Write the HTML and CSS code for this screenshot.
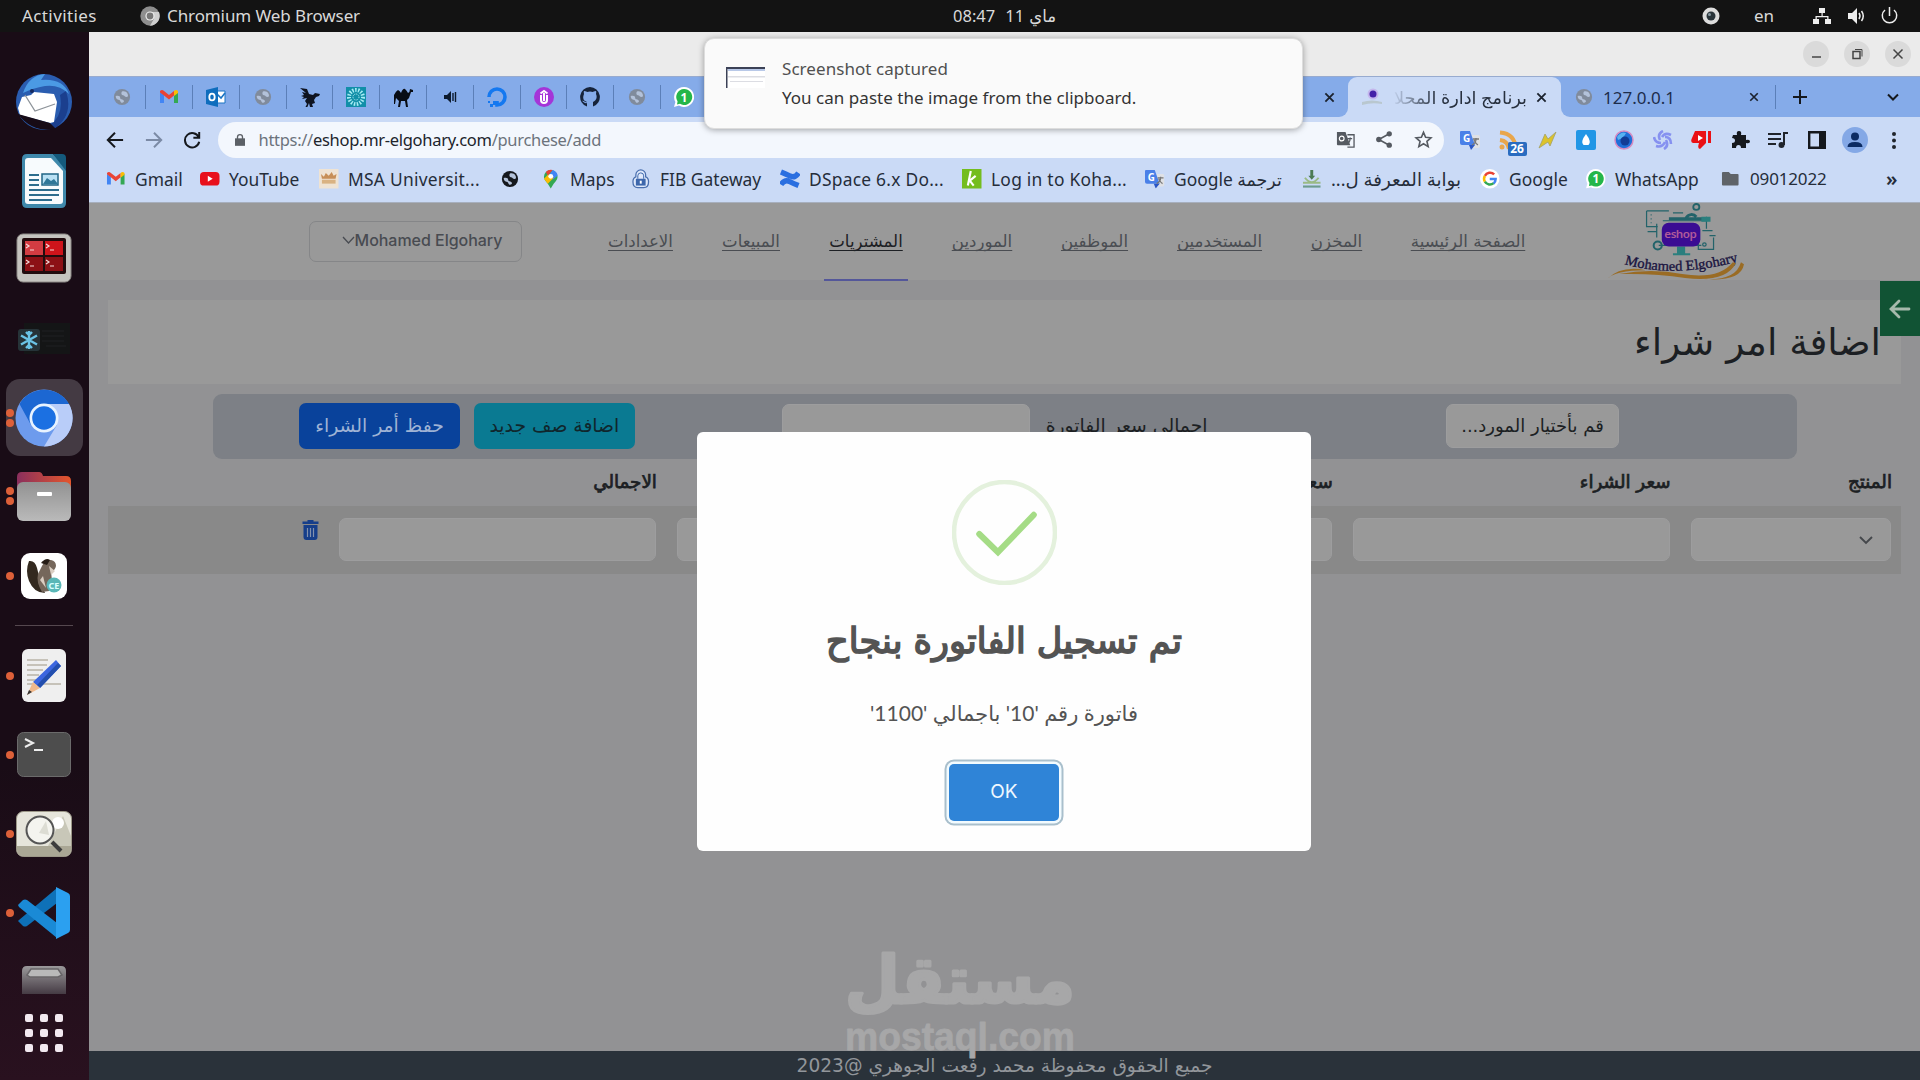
FILE: index.html
```html
<!DOCTYPE html>
<html lang="ar">
<head>
<meta charset="utf-8">
<title>برنامج ادارة المحلات</title>
<link rel="stylesheet" href="styles.css">
</head>
<body>
<svg class="defs" width="0" height="0" aria-hidden="true">
  <symbol id="globe" viewBox="0 0 20 20"><circle cx="10" cy="10" r="9"/><path class="land" d="M3 9c3-1 5 0 5 2s3 1 4 3-2 3-3 2-1-3-3-3-3-2-3-4zM10 4c2-1 5 0 6 2s1 4-1 4-2-2-4-2-2-3-1-4z"/></symbol>
  <symbol id="gmail" viewBox="0 0 20 20"><path fill="#4285f4" d="M1 5v11h4V8z"/><path fill="#34a853" d="M15 8v8h4V5z"/><path fill="#ea4335" d="M1 4q2-2 4 0l5 4 5-4v4.500l-5 4-5-4-4-3z"/><path fill="#fbbc04" d="M15 4q2-2 4 0v2l-4 3z"/></symbol>
  <symbol id="whats" viewBox="0 0 20 20"><path fill="#fff" d="M10 0a10 10 0 1 1-5 18.600L0 20l1.400-5A10 10 0 0 1 10 0z"/><path fill="#25b64a" d="M10 2a8 8 0 1 1-4 14.800L3 17.400l.6-3A8 8 0 0 1 10 2z"/><text x="10" y="14.500" font-size="12" font-weight="700" fill="#fff" text-anchor="middle">1</text></symbol>
  <symbol id="gtrans" viewBox="0 0 20 20"><path fill="#dfe1e5" d="M9 5h9q2 0 2 2v9q0 2-2 2h-7z"/><path fill="#4a80e8" d="M1 1h9l5 14H2q-2 0-2-2V2q0-1 1-1z"/><path fill="#2a56c6" d="M9 15h6l-4 5z"/><path fill="none" stroke="#777" stroke-width="1.300" d="M13 9h6M16 8v1c0 3-2 5-4 6M14 10c1 2 2 4 4 5"/><text x="6.500" y="12" font-size="10" font-weight="700" fill="#fff" text-anchor="middle">G</text></symbol>
  <symbol id="close" viewBox="0 0 12 12"><path fill="none" stroke="currentColor" stroke-width="2" d="M1.500 1.500l9 9M10.500 1.500l-9 9"/></symbol>
</svg>

<div class="desktop">
  <header class="topbar">
    <span class="activities">Activities</span>
    <svg class="app-glyph" viewBox="0 0 20 20"><circle cx="10" cy="10" r="9.700" fill="#8e8e8e"/><path fill="#cfcfcf" d="M10 6h9a10 10 0 0 1-9 13.700l4-7z"/><circle cx="10" cy="10" r="4.600" fill="#eee"/><circle cx="10" cy="10" r="3.400" fill="#777"/></svg>
    <span class="app-name">Chromium Web Browser</span>
    <span class="clock">08:47&nbsp; 11 ماي</span>
    <svg class="rec" viewBox="0 0 18 18"><circle cx="9" cy="9" r="8.500" fill="#ddd"/><circle cx="9" cy="9" r="4.500" fill="#29343a"/><circle cx="7.500" cy="7.500" r="1.500" fill="#8898a0"/></svg>
    <span class="lang">en</span>
    <svg class="sys" viewBox="0 0 88 20"><g fill="#eee"><path d="M7 2h6v5H7zM1 13h6v5H1zM13 13h6v5h-6z"/><path d="M9.500 7h1.200v3h5.800v3h-1.300v-1.800H4.800V13H3.500v-3h6z"/><path d="M36 7h4l5-5v16l-5-5h-4z"/></g><g fill="none" stroke="#eee" stroke-width="1.500"><path d="M47 7q2 3 0 6M49.500 5q3.500 5 0 10"/><path d="M73 4a7.200 7.200 0 1 0 9 0M77.500 1v9"/></g></svg>
  </header>

  <aside class="dock">
    <div class="app"><svg width="58" height="58" viewBox="0 0 58 58"><circle cx="29" cy="29" r="28" fill="#2a5db0"/><path fill="#4b9ae4" d="M8 20Q14 2 30 1l-4 6q22-2 28 14-10-10-24-8-12 2-22 7z"/><path fill="#1b3f8e" d="M51 18q8 24-12 38l-4-4q14-10 10-30z"/><path fill="#fff" d="M7 24l9-2 3-3 20 2 3 8-3 20-4 1L5 42l-2-7z"/><path fill="none" stroke="#8d9399" stroke-width="1.300" d="M10 22l10 16 20-7"/><path fill="#170b16" d="M3 41l32 9 6 6q-24 4-38-15z"/><circle cx="17" cy="18" r="2" fill="#15295f"/></svg></div>
    <div class="app"><svg width="46" height="56" viewBox="0 0 46 56"><path fill="#3f89ab" d="M6 1h26l13 13v36q0 5-5 5H6q-5 0-5-5V6q0-5 5-5z"/><path fill="#145a7c" d="M32 1h9q4 0 4 4v13z"/><path fill="#f7fbfd" d="M7 5h23l12 13v30q0 3-3 3H7q-3 0-3-3V8q0-3 3-3z"/><path stroke="#2c6d8d" stroke-width="2" d="M8 22h10M8 27h10M8 32h10M8 37h30M8 42h30M8 47h23"/><path fill="#b9e1f4" stroke="#216685" stroke-width="1.500" d="M21 21h16v11H21z"/><path fill="#2f7798" d="M22 31l4-6 4 3 3-2 4 5z"/></svg></div>
    <div class="app raised"><svg width="56" height="50" viewBox="0 0 56 50"><rect x="1" y="1" width="54" height="48" rx="6" fill="#c5c4bf" stroke="#8e8b87"/><rect x="6" y="5" width="44" height="36" rx="2" fill="#220c0e"/><path fill="#d33c42" d="M9 8h18v14H9z"/><path fill="#cf141b" d="M29 8h18v14H29z"/><path fill="#8c1015" d="M9 24h18v14H9zM29 24h18v14H29z"/><path fill="none" stroke="#f4dada" stroke-width="1.200" d="M10 11l3 2-3 2M14 17h4M30 11l3 2-3 2M34 17h4M10 27l3 2-3 2M14 33h4M30 27l3 2-3 2M34 33h4"/></svg></div>
    <div class="app"><svg width="52" height="32" viewBox="0 0 52 32"><path fill="#141516" d="M6 0h46v31H6z"/><path stroke="#1f2122" d="M24 8h22M24 13h22M24 18h22M28 23h20"/><rect y="6" width="22" height="22" rx="3" fill="#263338"/><path fill="none" stroke="#6bc4e6" stroke-width="2.400" d="M11 8v18M3 12.500l16 9M3 21.500l16-9M8 9l3 3 3-3M8 25l3-3 3 3"/></svg></div>
    <div class="app active"><i class="dots two"></i><svg width="58" height="58" viewBox="0 0 58 58"><circle cx="29" cy="29" r="28.500" fill="#6d9bed"/><path fill="#1c67d2" d="M4.500 15A28.500 28.500 0 0 1 54 15H29L16 36z"/><path fill="#b9cdf9" d="M29 15h25a28.500 28.500 0 0 1-25 42.500L42 36z"/><circle cx="29" cy="29" r="14.500" fill="#e8f3ff"/><circle cx="29" cy="29" r="11.800" fill="#1b70e2"/></svg></div>
    <div class="app"><i class="dots two"></i><svg width="54" height="50" viewBox="0 0 54 50"><defs><linearGradient id="fo"><stop stop-color="#8a2f5d"/><stop offset="1" stop-color="#e4562c"/></linearGradient><linearGradient id="fg" x2="0" y2="1"><stop stop-color="#929292"/><stop offset="1" stop-color="#bababa"/></linearGradient></defs><path fill="url(#fo)" d="M5 0h17q3 0 4 4h23q5 0 5 5v12H0V5q0-5 5-5z"/><rect y="10" width="54" height="39" rx="6" fill="url(#fg)"/><rect x="20" y="20" width="15" height="4" rx="1" fill="#fff"/></svg></div>
    <div class="app"><i class="dots"></i><svg width="48" height="48" viewBox="0 0 48 48"><rect x="1" y="1" width="46" height="46" rx="9" fill="#fff"/><path fill="#33291f" d="M9 9q-4 10 0 20 5 12 16 12l-4-9q-2-8-4-16-2-8-8-7z"/><path fill="#75675b" d="M22 14q3-7 9-6 5 1 5 6-1 5-5 5l1 10-3 10-7 1q-6-10-4-18z"/><path fill="#d9cdc1" d="M29 14l6 5-4 4zM23 24l3 12-6-8z"/><path fill="#261d16" d="M21 11q5-6 9-3l-3 5z"/><circle cx="34" cy="33" r="7.500" fill="#5ab7b7"/><text x="34" y="36.500" font-size="9" font-weight="700" text-anchor="middle" fill="#d9ffff">CE</text></svg></div>
    <hr>
    <div class="app"><i class="dots"></i><svg width="46" height="54" viewBox="0 0 46 54"><rect x="1" y="0" width="44" height="53" rx="6" fill="#efefef"/><path stroke="#c6c2b9" stroke-width="2" d="M6 11h21M6 16h20M6 21h16M6 26h12M6 31h9M6 35h34"/><path fill="#3c66df" d="M35 11l5 6-21 22-7-6z"/><path fill="#234fae" d="M37 14l3 3-21 22-3-3z"/><path fill="#f0b98c" d="M12 33l7 6-13 7z"/><path fill="#333" d="M8 41l3 2-5 3z"/></svg></div>
    <div class="app"><i class="dots"></i><svg width="54" height="46" viewBox="0 0 54 46"><rect x=".5" y=".5" width="53" height="44" rx="6" fill="#4d4d4d" stroke="#6b6b6b"/><path fill="none" stroke="#eee" stroke-width="2" d="M8 7l8 4-8 4M17 18h9"/></svg></div>
    <div class="app"><i class="dots"></i><svg width="56" height="46" viewBox="0 0 56 46"><rect x=".5" y=".5" width="55" height="45" rx="7" fill="#e6e5db" stroke="#9c9888"/><path fill="#c8c7b8" d="M32 35L47 5l8 20v10z"/><path fill="#aaa795" d="M1 35h54v4q0 6-6 6H7q-6 0-6-6z"/><circle cx="42" cy="12" r="6" fill="#fff"/><path stroke="#3c3c3c" stroke-width="4" d="M36 31l9 9"/><circle cx="24" cy="19" r="13.500" fill="#f4f4ef" stroke="#555" stroke-width="2"/><path fill="#dcdcd3" d="M23 22l7-12 3 14z"/></svg></div>
    <div class="app"><i class="dots"></i><svg width="52" height="52" viewBox="0 0 52 52"><path fill="#0e71b8" d="M0 34l5 5q2 1 4 0l30-23V1L1 33z"/><path fill="#1a8ad6" d="M0 18l5-5q2-1 4 0l30 23v15L1 20z"/><path fill="#2ba0f0" d="M38 0l12 6q2 1 2 3v34q0 2-2 3l-12 6z"/></svg></div>
    <div class="trash-app"><svg width="46" height="29" viewBox="0 0 46 29"><defs><linearGradient id="tg" x2="0" y2="1"><stop stop-color="#9b999b"/><stop offset="1" stop-color="#453b44"/></linearGradient></defs><path fill="url(#tg)" d="M1 6q0-5 5-5h34q5 0 5 5v23H1z"/><path fill="#b9b9b9" stroke="#686568" stroke-width="1.500" d="M6 10l4-6h27l4 6-4 2H9z"/></svg></div>
    <div class="launcher"><i></i><i></i><i></i><i></i><i></i><i></i><i></i><i></i><i></i></div>
  </aside>

  <main class="window">
    <div class="titlebar">
      <b><svg viewBox="0 0 26 26"><path d="M9 16h9"/></svg></b>
      <b><svg viewBox="0 0 26 26"><path d="M9 10.500h7v7H9z"/><path class="thin" d="M11 8.500h7v7"/></svg></b>
      <b><svg viewBox="0 0 26 26"><path d="M8.500 8.500l9 9M17.500 8.500l-9 9"/></svg></b>
    </div>

    <div class="tabstrip">
      <div class="tabs-left">
        <div class="mini"><svg class="globe"><use href="#globe"/></svg></div>
        <div class="mini"><svg><use href="#gmail"/></svg></div>
        <div class="mini"><svg viewBox="0 0 20 20"><path fill="#fff" stroke="#1a74c4" d="M9 4h10v12H9z"/><path fill="none" stroke="#1a74c4" stroke-width="1.600" d="M10 6l5 5 4-5"/><path fill="#0f6dbd" d="M0 3l12-3v20L0 17z"/><ellipse cx="6" cy="10" rx="2.700" ry="3.400" fill="none" stroke="#fff" stroke-width="1.800"/></svg></div>
        <div class="mini"><svg class="globe"><use href="#globe"/></svg></div>
        <div class="mini"><svg viewBox="0 0 20 20"><path fill="#0e1320" d="M0 1l7 1 2 5 4 1 2-2 5 1-1 2-3 1-2 3 1 3-3 1 1 3h-3l-1-4-2 5H5l2-4-2-3 2-3-5 1 2-2-3-1 3-1-2-3 4 1z"/></svg></div>
        <div class="mini"><svg viewBox="0 0 20 20"><path fill="#118fa8" d="M0 0h20v20H0z"/><circle cx="10" cy="10" r="7" fill="none" stroke="#a6ecf4" stroke-width="4" stroke-dasharray="1.500 1.400"/><circle cx="10" cy="10" r="3" fill="none" stroke="#c3f5fa" stroke-dasharray="1 1"/></svg></div>
        <div class="mini"><svg viewBox="0 0 20 20"><path fill="#080c14" d="M1 8q2-4 4-5 2 1 3 3 2-5 4-4 2 2 3 4 2-1 2-4l3 1v2h-2l-2 6-2 2 1 7h-2l-1-6H8l-1 6H5l1-6-3-3-1 6H1z"/></svg></div>
        <div class="mini"><svg viewBox="0 0 20 20"><path fill="#0d1b2e" d="M4 8h3l4-4v12l-4-4H4z"/><path stroke="#0d1b2e" stroke-width="1.400" d="M13 6v8M15.500 5v10"/></svg></div>
        <div class="mini"><svg viewBox="0 0 20 20"><path fill="none" stroke="#1478f0" stroke-width="3.600" d="M2 10a8 8 0 1 1 8 8v-4"/><path fill="#1478f0" d="M6 14h4v4H6zM3 17h3v3H3zM1 14h2v2H1z"/></svg></div>
        <div class="mini"><svg viewBox="0 0 20 20"><circle cx="10" cy="10" r="10" fill="#a435d8"/><path fill="none" stroke="#fff" stroke-width="2" d="M7 8v5q0 3 3 3t3-3V8M10 14V6M6.500 6.500L10 4l3.500 2.500"/></svg></div>
        <div class="mini"><svg viewBox="0 0 20 20"><path fill="#16233a" d="M10 0a10 10 0 0 0-3 19.500V16c-3 1-4-2-5-2 2-1 3 2 5 1-3-1-5-3-3-8-.5-2 0-3 0-3 2 0 3 1 3 1q3-1 6 0s1-1 3-1c0 0 .5 1 0 3 2 5-1 7-3 8v4.500A10 10 0 0 0 10 0z"/></svg></div>
        <div class="mini"><svg class="globe"><use href="#globe"/></svg></div>
        <div class="mini"><svg><use href="#whats"/></svg></div>
        <svg class="x"><use href="#close"/></svg>
      </div>
      <div class="tab-slot"><div class="tab">
        <svg class="fav" viewBox="0 0 20 20"><path fill="#b9c7cf" d="M0 15q10-3 20 0v2q-10-2-20 1z"/><circle cx="11" cy="7" r="5.500" fill="#c4b6ec"/><circle cx="11" cy="7" r="3.500" fill="#4420a8"/></svg>
        <span class="tab-title" dir="rtl">برنامج ادارة المحلا</span>
        <svg class="x"><use href="#close"/></svg>
      </div></div>
      <div class="tabs-right">
        <svg class="globe"><use href="#globe"/></svg>
        <span class="tab-name">127.0.0.1</span>
        <svg class="x"><use href="#close"/></svg>
        <svg class="plus" viewBox="0 0 14 14"><path d="M7 0v14M0 7h14"/></svg>
        <svg class="chev" viewBox="0 0 14 14"><path d="M2 4.500l5 5 5-5"/></svg>
      </div>
    </div>

    <div class="toolbar">
      <svg class="nav-ic" viewBox="0 0 20 20"><path d="M19 10H2.500M10 2l-8 8 8 8"/></svg>
      <svg class="nav-ic off" viewBox="0 0 20 20"><path d="M1 10h16.500M10 2l8 8-8 8"/></svg>
      <svg class="nav-ic" viewBox="0 0 20 20"><path d="M17.500 7A8 8 0 1 0 18 12M18 1v6.500h-6.500"/></svg>
      <div class="omnibox">
        <svg class="lock" viewBox="0 0 12 14"><path fill="#5b6066" d="M0 5h12v9H0z"/><path fill="none" stroke="#5b6066" stroke-width="1.600" d="M3 6V3.500a3 3 0 0 1 6 0V6"/></svg>
        <span class="url">https://<b>eshop.mr-elgohary.com</b>/purchese/add</span>
        <svg viewBox="0 0 20 20"><path fill="#555a61" d="M1 2h9l5 14H2q-1 0-1-1z"/><path fill="none" stroke="#555a61" stroke-width="1.400" d="M12 5h7v13h-7M12 9h5M15 8c0 3-1 5-2 6"/><circle cx="6" cy="9" r="2.500" fill="none" stroke="#fff" stroke-width="1.200"/></svg>
        <svg viewBox="0 0 20 20"><g fill="#555a61"><circle cx="15" cy="4" r="2.800"/><circle cx="4" cy="10" r="2.800"/><circle cx="15" cy="16" r="2.800"/></g><path fill="none" stroke="#555a61" stroke-width="1.700" d="M15 4L4 10l11 6"/></svg>
        <svg viewBox="0 0 20 20"><path fill="none" stroke="#555a61" stroke-width="1.700" d="M10 2.500l2.200 5.200 5.600.5-4.200 3.700 1.300 5.600-4.900-3-4.900 3 1.300-5.600-4.200-3.700 5.600-.5z"/></svg>
      </div>
      <div class="exts">
        <svg><use href="#gtrans"/></svg>
        <div class="rss"><svg viewBox="0 0 20 20"><g fill="none" stroke="#e9a64b" stroke-width="4"><path d="M1 2.500q15 1 16 17M1 10q8 1 9 9"/></g><circle cx="3" cy="17" r="2.500" fill="#e9a64b"/></svg><em>26</em></div>
        <svg viewBox="0 0 20 20"><path fill="#dcc32b" stroke="#a3a167" stroke-width=".8" d="M8 4L2 18l9-6 2 4 6-14-8 7z"/></svg>
        <svg viewBox="0 0 20 20"><rect width="20" height="20" rx="2" fill="#2196e6"/><path fill="#fff" d="M10 4q6 8 2.500 11h-5Q4 12 10 4z"/></svg>
        <svg viewBox="0 0 20 20"><circle cx="10" cy="10" r="9" fill="#1f6fd8" stroke="#d48cc2" stroke-width="1.500"/><path fill="#58b2f0" d="M3 7q4-6 9-4-2 5-8 7z"/><circle cx="11" cy="11" r="4.500" fill="#123c95"/></svg>
        <svg viewBox="0 0 20 20"><g fill="none" stroke="#8691f0" stroke-width="2.600"><path d="M10 1q-6 3-3 9M18 5q-6-3-9 2M18 14q0-7-6-7M11 19q5-3 2-9M3 16q6 2 9-4M1 7q1 6 7 6"/></g></svg>
        <svg viewBox="0 0 20 20"><path fill="#ea1015" d="M4 1h11v12l-6 6q-3 0-1-6H2q-3-1-1-5zM17 1h3v12h-3z"/><path fill="#fff" d="M7 5l5 3-5 3z"/></svg>
        <svg viewBox="0 0 20 20"><path fill="#15181d" d="M3 5h4q-1-4 2-4t2 4h5v5q4-1 4 1.500t-4 1.500v5h-5q0-3-2.500-3T6 18H2v-5q3 0 3-2.500T2 8z"/></svg>
        <svg viewBox="0 0 20 20"><path fill="none" stroke="#20242b" stroke-width="2" d="M0 4h13M0 9h13M0 14h8M16 15V3h4"/><circle cx="13.500" cy="15" r="3" fill="#20242b"/></svg>
        <svg viewBox="0 0 20 20"><path fill="none" stroke="#15181d" stroke-width="2.400" d="M2.200 2.200h15.600v15.600H2.200z"/><path fill="#15181d" d="M12 2h6v16h-6z"/></svg>
        <svg class="avatar" viewBox="0 0 26 26"><circle cx="13" cy="13" r="13" fill="#84a8e6"/><circle cx="13" cy="9.500" r="4" fill="#0c2b63"/><path fill="#0c2b63" d="M5.500 20q0-5 7.500-5t7.500 5z"/></svg>
        <svg viewBox="0 0 20 20"><g fill="#20242b"><circle cx="10" cy="4" r="2"/><circle cx="10" cy="10.500" r="2"/><circle cx="10" cy="17" r="2"/></g></svg>
      </div>
    </div>

    <div class="bookmarks">
      <a><svg><use href="#gmail"/></svg>Gmail</a>
      <a><svg viewBox="0 0 20 20"><rect y="3" width="20" height="14" rx="4" fill="#e8101c"/><path fill="#fff" d="M8 7l5 3-5 3z"/></svg>YouTube</a>
      <a><svg viewBox="0 0 20 20"><path fill="#efe3d3" d="M0 0h20v20H0z"/><path fill="#c78f58" d="M2 5l3 3 2-4 3 3 3-4 2 4 3-2-1 5H3z"/><path fill="#d9b282" d="M3 11h14v4H3z"/></svg><span class="wide">MSA Universit...</span></a>
      <a><svg class="globe dark"><use href="#globe"/></svg></a>
      <a><svg class="pin" viewBox="0 0 20 20"><path fill="#34a853" d="M3 8a7 7 0 0 1 14 0q0 3-4 7l-3 5-3-5Q3 11 3 8z"/><path fill="#ea4335" d="M5 3a7 7 0 0 1 7-2L7 7z"/><path fill="#4285f4" d="M12 1q5 2 5 6l-5 4-3-6z"/><path fill="#fbbc04" d="M3 10l4-4 6 3-6 6z"/><circle cx="10" cy="7.500" r="2.500" fill="#fff"/></svg>Maps</a>
      <a><svg viewBox="0 0 20 20"><path fill="#dfe9fb" stroke="#4a6fae" stroke-width="1.300" d="M5 8V6a5 5 0 0 1 10 0v2q3 1 3 5 0 6-5 6H7q-5 0-5-6 0-4 3-5z"/><path fill="#3d67ac" d="M5 10h10v7H5z"/><path fill="none" stroke="#3d67ac" d="M7 10V7a3 3 0 0 1 6 0v3"/><path fill="#fff" d="M9 12h2v3H9z"/></svg>FIB Gateway</a>
      <a><svg viewBox="0 0 20 20"><path fill="none" stroke="#2a6fe0" stroke-width="5.500" d="M1 16q4-6 9-3 4 2 9 4M19 4q-4 6-9 3Q6 5 1 3"/></svg><span class="wide">DSpace 6.x Do...</span></a>
      <a><svg viewBox="0 0 20 20"><path fill="#74bd1e" d="M0 0h20v20H0z"/><path fill="none" stroke="#fff" stroke-width="2.200" d="M9 2L6 17M14 7l-6 5 4 5"/></svg><span class="wide">Log in to Koha...</span></a>
      <a><svg><use href="#gtrans"/></svg><span dir="ltr">Google ترجمة</span></a>
      <a><svg viewBox="0 0 20 20"><path fill="#4d7b55" d="M8.500 1h3v6h2L10 11 6.500 7h2z"/><path fill="none" stroke="#9aba85" stroke-width="2" d="M3 9q7 9 14 0M1 14h18"/><path stroke="#6d9c8e" stroke-width="2.200" d="M1 18h18"/></svg><span class="knowledge" dir="rtl">بوابة المعرفة ل...</span></a>
      <a><svg viewBox="0 0 20 20"><circle cx="10" cy="10" r="10" fill="#fff"/><g fill="none" stroke-width="2.600"><path stroke="#ea4335" d="M5 7a6 6 0 0 1 9.500-1.500"/><path stroke="#fbbc04" d="M5 13a6 6 0 0 1 0-6"/><path stroke="#34a853" d="M14 14.500A6 6 0 0 1 5 13"/><path stroke="#4285f4" d="M10 10.300h6q0 3-2 4.500"/></g></svg>Google</a>
      <a><svg><use href="#whats"/></svg>WhatsApp</a>
      <a><svg viewBox="0 0 20 20"><path fill="#5f6368" d="M1 4q0-1 1-1h6l2 2h7q1 0 1 1v10q0 1-1 1H2q-1 0-1-1z"/></svg><span class="folder">09012022</span></a>
      <a class="more">»</a>
    </div>

    <section class="page">
      <header class="site-head">
        <div class="user"><svg viewBox="0 0 12 8"><path d="M.5 1l5.500 6 5.500-6"/></svg>Mohamed Elgohary</div>
        <nav>
          <a>الاعدادات</a><a>المبيعات</a><a class="on">المشتريات</a><a>الموردين</a><a>الموظفين</a><a>المستخدمين</a><a>المخزن</a><a>الصفحة الرئيسية</a>
        </nav>
        <svg class="logo" viewBox="0 0 136 78" width="138" height="77" preserveAspectRatio="none">
          <g fill="none" stroke="#23636a" stroke-width="1.200"><path d="M39 8h22M39 8v16h11M43 12h1M43 16h1M43 20h1M65 10h10M55 18h43M40 29h9M49 21v14M51 43h42M98 14v12M94 28h10M101 33h6M90 37v10h15V35"/><circle cx="50" cy="43" r="4" stroke-width="2"/><circle cx="88" cy="4" r="3" stroke-width="1.800"/><path stroke-width="3" d="M78 15a6 6 0 0 1 10-1M61 16h36"/><circle cx="96" cy="42" r="1.700"/></g>
          <path fill="#2b7f7e" d="M93 14h9v5h-9zM69 44h8v7h5v2H65v-2h4z"/>
          <rect x="54" y="20" width="38" height="24" rx="7" fill="#3a0c93"/>
          <text x="72.500" y="35" font-size="11.500" font-weight="600" textLength="32" text-anchor="middle" fill="#b05a9a" font-family="Noto Sans">eshop</text>
          <path id="arc" fill="none" d="M17 62q52 15 116-4"/>
          <text font-size="14.300" stroke="#1a1440" stroke-width=".35" fill="#1a1440" font-family="Liberation Serif"><textPath href="#arc">Mohamed Elgohary</textPath></text>
          <path fill="#9a6c24" d="M0 77q14-14 38-9Q8 68 0 77zM12 72q32-6 62 0 36 6 50-12l3 1q-10 20-50 15-30-5-65-4zM95 77q32 2 37-17l3 2q-3 18-40 15z"/>
        </svg>
      </header>

      <div class="side-toggle"><svg viewBox="0 0 22 20"><path d="M20 10H3M10 2l-8 8 8 8"/></svg></div>

      <div class="title-card"><h1 dir="rtl">اضافة امر شراء</h1></div>

      <div class="filter">
        <div class="btn primary">حفظ أمر الشراء</div>
        <div class="btn info">اضافة صف جديد</div>
        <div class="field total"></div>
        <label>اجمالي سعر الفاتورة</label>
        <div class="field supplier" dir="rtl">قم بأختيار المورد...</div>
      </div>

      <div class="cols heads" dir="rtl"><span>المنتج</span><span>سعر الشراء</span><span>سعر البيع</span><span>الكمية</span><span>الاجمالي</span></div>
      <div class="cols row" dir="rtl">
        <div class="field sel"><svg viewBox="0 0 14 10"><path d="M1 2l6 6 6-6"/></svg></div>
        <div class="field"></div><div class="field"></div><div class="field"></div><div class="field"></div>
        <svg class="bin" viewBox="0 0 16 20"><path fill="#163e8a" d="M5 0h6v1.500h5V4H0V1.500h5zM1 5h14v12q0 3-3 3H4q-3 0-3-3z"/><path stroke="#8291ad" stroke-width="1.200" d="M5 8v9M8 8v9M11 8v9"/></svg>
      </div>

      <footer dir="rtl">جميع الحقوق محفوظة محمد رفعت الجوهري @2023</footer>
    </section>
  </main>

  <svg class="watermark" viewBox="0 0 240 125" width="240" height="125">
    <text class="wm-ar" x="120" y="63" text-anchor="middle" textLength="230" lengthAdjust="spacingAndGlyphs">مستقل</text>
    <text class="wm-en" x="120" y="110" text-anchor="middle" textLength="230" lengthAdjust="spacingAndGlyphs">mostaql.com</text>
  </svg>

  <div class="modal">
    <svg class="ok-icon" viewBox="0 0 104 104"><circle cx="52" cy="52" r="50" fill="none" stroke="#e4f1dd" stroke-width="4.500"/><path fill="none" stroke="#a5dc86" stroke-width="6" stroke-linecap="round" d="M27 53.500l18.500 18L81 34.500"/></svg>
    <h2 dir="rtl">تم تسجيل الفاتورة بنجاح</h2>
    <p dir="rtl">فاتورة رقم '10' باجمالي '1100'</p>
    <button>OK</button>
  </div>

  <div class="toast">
    <svg viewBox="0 0 40 22" width="40" height="22"><path fill="#fff" d="M1 1h38v20H1z"/><path fill="#3b4156" d="M0 0h39v2H0zM0 2h1.500v19H0z"/><path fill="#b9c9e8" d="M2 2h37v2H2z"/><path fill="#dcdde3" d="M2 9h37v1.500H2zM4 14h33v1H4z"/></svg>
    <div><div class="t1">Screenshot captured</div><div class="t2">You can paste the image from the clipboard.</div></div>
  </div>
</div>
</body>
</html>
```
FILE: styles.css
```css
* { box-sizing: border-box; }
body { margin: 0; width: 1920px; height: 1080px; overflow: hidden; font-family: "Noto Sans", "DejaVu Sans", sans-serif; font-size: 17px; }
h1, h2, p { margin: 0; }
.defs { position: absolute; }
.desktop { position: relative; width: 1920px; height: 1080px; display: grid; grid-template: 32px 1048px / 89px 1831px; background: #929294; }

/* top panel */
.topbar { grid-column: 1 / 3; background: #131313; color: #d9d9d9; display: grid; grid-template-columns: 118px 27px 786px 772px 29px 58px 88px; padding-left: 22px; align-items: center; line-height: 32px; white-space: nowrap; }
.activities { letter-spacing: .4px; }
.app-glyph { width: 20px; height: 20px; }
.app-name { letter-spacing: -.1px; }
.clock { font-size: 16.500px; direction: ltr; word-spacing: .8px; }
.rec { width: 18px; height: 18px; margin-left: -23px; justify-self: start; }
.lang { text-align: left; }
.sys { width: 88px; height: 20px; }

/* dock */
.dock { background: linear-gradient(#190c16 70%, #29111f); display: flex; flex-direction: column; align-items: center; padding: 30px 1px 0 0; }
.app { position: relative; width: 77px; height: 79px; display: flex; align-items: center; justify-content: center; flex: none; }
.app.raised { padding-bottom: 4px; }
.app.active { background: #443a43; border-radius: 14px; height: 77px; margin: 1px 0; }
.dots { position: absolute; left: 0; width: 8px; height: 8px; top: 36px; border-radius: 50%; background: #dd6039; }
.dots.two { top: 30px; }
.dots.two::after { content: ""; position: absolute; top: 10px; width: 8px; height: 8px; border-radius: 50%; background: #dd6039; }
.dock hr { width: 58px; height: 1px; border: 0; background: #55484f; margin: 10px 0; flex: none; }
.trash-app { height: 30px; margin-top: 13px; }
.launcher { display: grid; grid-template-columns: repeat(3, 8px); gap: 7px; margin-top: 19px; }
.launcher i { width: 8px; height: 8px; border-radius: 2px; background: #f2e9f0; }

/* browser chrome */
.window { display: flex; flex-direction: column; min-width: 0; }
.titlebar { height: 44px; background: #ebebeb; display: flex; justify-content: flex-end; align-items: center; gap: 15px; padding-right: 9px; }
.titlebar b { width: 26px; height: 26px; border-radius: 50%; background: #dadada; }
.titlebar svg { display: block; fill: none; stroke: #444; stroke-width: 1.500; }
.thin { stroke-width: 1; }
.tabstrip { height: 41px; background: #cadaf6; display: grid; grid-template-columns: 1259px 213px 359px; border-top: 1px solid #98abcf; }
.tabs-left { background: #85abe9; border-bottom-right-radius: 9px; display: flex; align-items: center; padding-left: 10.500px; }
.mini { width: 46.800px; flex: none; display: flex; justify-content: center; align-items: center; height: 24px; border-right: 1.500px solid #5b7fb8; }
.mini:last-of-type { border: 0; }
.mini svg { width: 20px; height: 20px; }
.mini svg.globe { width: 18px; height: 18px; }
.globe { fill: #808b9c; }
.globe .land, .land { fill: #b3c2da; }
.globe.dark { fill: #15181d; }
.x { width: 11px; height: 11px; color: #1b222e; }
.tabs-left .x { margin-left: 616px; }
.tab-slot { background: #85abe9; }
.tab { height: 40px; background: #cadaf6; border-radius: 9px 9px 0 0; display: grid; grid-template-columns: 20px 1fr 11px; align-items: center; padding: 0 14px; gap: 9px; }
.fav { width: 20px; height: 20px; }
.tab-title { color: #27303e; font-size: 17.700px; line-height: 32px; white-space: nowrap; text-align: right; -webkit-mask-image: linear-gradient(90deg, transparent, #000 45px); mask-image: linear-gradient(90deg, transparent, #000 45px); }
.tabs-right { background: #85abe9; border-bottom-left-radius: 9px; display: grid; grid-template-columns: 18px 156px 27px 110px 14px; align-items: center; padding-left: 14px; color: #1d2d4c; }
.tabs-right .globe { width: 18px; height: 18px; }
.tab-name { padding-left: 10px; }
.tabs-right .x { width: 27px; padding-right: 16px; height: 24px; border-right: 1.500px solid #5b7fb8; color: #1b222e; }
.plus { width: 14px; height: 14px; margin-left: 17px; fill: none; stroke: #15181d; stroke-width: 2; }
.chev { width: 14px; height: 14px; fill: none; stroke: #15181d; stroke-width: 2; }

.toolbar { height: 46px; background: #cadaf6; display: grid; grid-template-columns: 18px 18px 18px 1226px 1fr; align-items: center; padding: 0 0 1px 17px; gap: 20.500px; }
.nav-ic { width: 18px; height: 18px; fill: none; stroke: #15181d; stroke-width: 2.200; }
.nav-ic.off { stroke: #7b8aa5; }
.omnibox { height: 36px; margin-left: -4px; width: 1226px; border-radius: 18px; background: #f3f7fd; display: flex; align-items: center; padding: 0 11px 0 17px; gap: 20px; }
.omnibox svg { width: 19px; height: 19px; flex: none; }
.omnibox .lock { width: 10px; height: 14px; margin-right: -6px; }
.url { flex: 1; font-size: 16.500px; color: #6c737c; letter-spacing: -.3px; }
.url b { font-weight: 400; color: #20242b; }
.exts { display: flex; align-items: center; gap: 18.500px; margin-left: -8px; }
.exts svg { width: 20px; height: 20px; flex: none; display: block; }
.exts .avatar { width: 26px; height: 26px; margin: 0 -3px; }
.rss { position: relative; }
.rss em { position: absolute; left: 9px; top: 12px; width: 19px; height: 14px; background: #2a6cc0; color: #fff; font: 700 12px/14px "Noto Sans", sans-serif; text-align: center; border-radius: 2px; }

.bookmarks { height: 39px; background: #cadaf6; display: grid; grid-template-columns: 94px 119px 182px 40px 90px 149px 182px 183px 157px 178px 106px 135px 165px 20px; padding: 0 0 7px 17px; align-items: center; color: #252d3a; white-space: nowrap; font-size: 17.400px; }
.bookmarks a { display: flex; align-items: center; gap: 9.500px; line-height: 32px; }
.bookmarks svg { width: 19.500px; height: 19.500px; flex: none; }
.bookmarks .globe { width: 18px; height: 18px; }
.wide { letter-spacing: .25px; }
.knowledge { font-size: 18.200px; }
.folder { font-size: 17px; letter-spacing: -.15px; }
.bookmarks .more { font-size: 20px; font-weight: 600; }

/* dimmed web page */
.page { position: relative; flex: 1; display: flex; flex-direction: column; background: #929294; border-top: 1px solid #a7afbd; font-family: "DejaVu Sans", sans-serif; color: #1c1f23; }
.site-head { height: 77px; background: #999; display: flex; align-items: flex-start; padding-left: 220px; }
.user { width: 213px; height: 41px; margin-top: 18px; padding: 0 0 3px 13px; border: 1.500px solid #858688; border-radius: 7px; display: flex; align-items: center; justify-content: center; color: #484b51; font: 500 16px "Inter", sans-serif; letter-spacing: -.03px; }
.user svg { width: 13px; height: 8px; fill: none; stroke: #484b51; stroke-width: 1.300; }
nav { display: grid; grid-template-columns: 65px 58px 74px 60px 67px 85px 51px 114px; gap: 49px; margin-left: 86px; height: 78px; }
nav a { display: flex; justify-content: center; align-items: center; white-space: nowrap; color: #4a4d52; font-size: 16.600px; text-decoration: underline; text-decoration-skip-ink: none; text-underline-offset: 3px; height: 78px; padding-bottom: 1px; }
nav a.on { color: #1d2024; border-bottom: 2.500px solid #54579a; margin: 0 -5px; padding: 1px 0 0; }
.logo { margin-left: 82px; }
.side-toggle { position: absolute; right: 0; top: 78px; width: 40px; height: 55px; background: #115334; display: flex; align-items: center; justify-content: center; }
.side-toggle svg { width: 22px; height: 20px; fill: none; stroke: #a6b9ac; stroke-width: 2.800; stroke-linecap: round; }
.title-card { height: 84px; margin: 20px 19px 0; background: #999; display: flex; align-items: center; justify-content: flex-end; padding-right: 20px; }
h1 { font-weight: 400; font-size: 37.500px; line-height: 60px; }
.filter { height: 65px; margin: 9.500px 123.500px 0 124px; padding: 0 177px 0 86px; border-radius: 9px; background: #7d8086; display: flex; align-items: center; white-space: nowrap; font-size: 18.800px; }
.btn { width: 161px; height: 46px; padding-bottom: 1px; border-radius: 7px; display: flex; align-items: center; justify-content: center; }
.primary { background: #09429b; color: #9fb3d5; margin-right: 14px; }
.info { background: #0a7a92; color: #10262c; margin-right: 147px; }
.field { background: #999; border: 1px solid #9d9d9e; border-radius: 7px; height: 43px; }
.filter .field { height: 44px; }
.total { width: 248px; }
.filter label { width: 162px; margin: 0 238px 2px 16px; text-align: center; }
.supplier { width: 174px; padding-bottom: 1px; display: flex; align-items: center; justify-content: center; font-size: 18px; }
.cols { display: grid; grid-template-columns: 200px 316.500px 316.500px 316.500px 316.500px 60px; column-gap: 21.400px; margin: 0 19px; padding-right: 10px; }
.heads { height: 47px; align-items: center; font-size: 18.300px; padding: 0 9px 2px 0; -webkit-text-stroke: .75px #1c1f23; }
.row { height: 68px; background: #898989; align-items: center; }
.sel { display: flex; align-items: center; padding-right: 17px; }
.sel svg { width: 14px; height: 10px; fill: none; stroke: #44474b; stroke-width: 1.900; }
.bin { width: 17px; height: 20px; margin-top: -19px; margin-right: -1px; }
footer { margin-top: auto; height: 29px; background: #2a323a; color: #92969b; font: 18.600px/29px "DejaVu Sans", sans-serif; text-align: center; }

/* overlays */
.watermark { position: absolute; left: 840px; top: 940px; fill: #a7a7a8; stroke: #a7a7a8; stroke-linejoin: round; }
.wm-ar { font: 700 66px "DejaVu Sans", sans-serif; stroke-width: 3px; }
.wm-en { font: 700 39px "Liberation Sans", sans-serif; stroke-width: .8px; }
.modal { position: absolute; left: 697px; top: 432px; width: 614px; height: 419px; background: #fefefe; border-radius: 6px; display: flex; flex-direction: column; align-items: center; color: #545454; font-family: "Inter", "DejaVu Sans", sans-serif; }
.ok-icon { width: 105px; height: 105px; margin-top: 48px; }
.modal h2 { font: 400 35.100px/58px "DejaVu Sans", sans-serif; -webkit-text-stroke: 1.600px #545454; margin-top: 27px; white-space: nowrap; }
.modal p { font-family: "Lato", "DejaVu Sans", sans-serif; font-size: 21px; line-height: 36px; margin-top: 25px; white-space: nowrap; }
.modal button { width: 110px; height: 57px; margin-top: 33px; padding-bottom: 4px; background: #2f84d7; color: #eef8ff; border: 0; border-radius: 5px; font: 400 19px "Inter", sans-serif; box-shadow: 0 0 0 2.500px #f2fbff, 0 0 0 4.500px #a9bfcc; }
.toast { position: absolute; left: 704px; top: 38px; width: 599px; height: 91px; background: #fafafa; border-radius: 10px; border: 1px solid #ddd; box-shadow: 0 1px 6px rgba(0,0,0,.35); display: flex; padding: 15px 21px; gap: 16px; white-space: nowrap; line-height: 29px; color: #333; }
.toast svg { margin-top: 13px; }
.t1 { color: #505050; letter-spacing: .06px; }
.t2 { letter-spacing: .03px; }
```
